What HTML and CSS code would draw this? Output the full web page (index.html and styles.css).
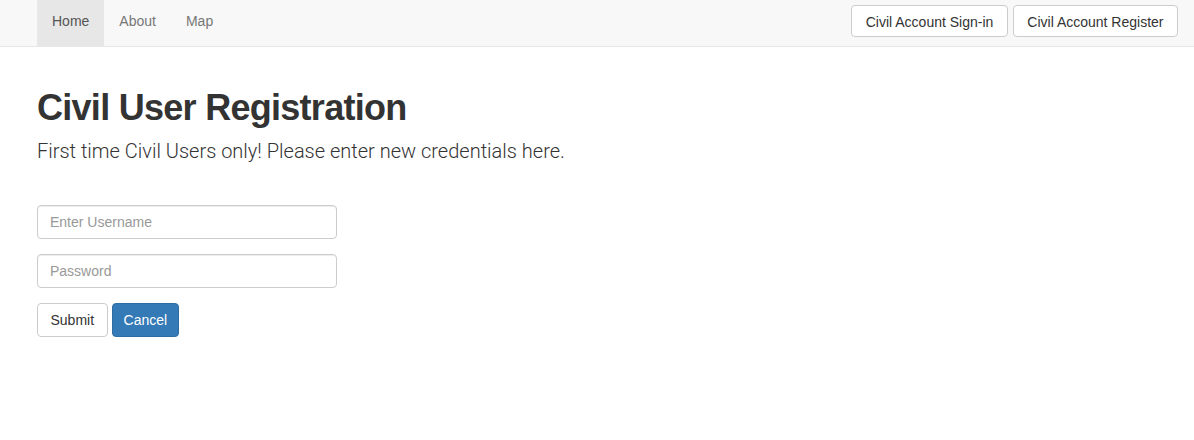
FILE: index.html
```html
<!DOCTYPE html>
<html>
<head>
<meta charset="utf-8">
<link rel="stylesheet" href="styles.css">
<title>Civil User Registration</title>
</head>
<body>
<nav class="navbar">
  <ul class="nav-links">
    <li class="active"><a href="#">Home</a></li>
    <li><a href="#">About</a></li>
    <li><a href="#">Map</a></li>
  </ul>
  <div class="nav-actions">
    <button class="btn">Civil Account Sign-in</button>
    <button class="btn">Civil Account Register</button>
  </div>
</nav>
<main class="content">
  <h1 class="title">Civil User Registration</h1>
  <p class="lead">First time Civil Users only! Please enter new credentials here.</p>
  <form class="form">
    <div class="form-group"><input class="form-control" type="text" placeholder="Enter Username"></div>
    <div class="form-group"><input class="form-control" type="password" placeholder="Password"></div>
    <div class="form-actions">
      <button type="button" class="btn">Submit</button>
      <button type="button" class="btn btn-primary">Cancel</button>
    </div>
  </form>
</main>
</body>
</html>
```

FILE: styles.css
```css
* { box-sizing: border-box; }
html, body { margin: 0; padding: 0; background: #fff; }
body {
  font-family: "Liberation Sans", Arial, sans-serif;
  font-size: 14px;
  line-height: 1.42857;
  color: #333;
}
.navbar {
  display: flex;
  justify-content: space-between;
  align-items: center;
  height: 47px;
  background: #f8f8f8;
  border-bottom: 1px solid #e7e7e7;
  padding: 0 16px 0 37px;
}
.nav-links {
  display: flex;
  list-style: none;
  margin: 0;
  padding: 0;
  height: 46px;
  align-self: flex-start;
}
.nav-links li a {
  display: block;
  padding: 0 15px;
  line-height: 42px;
  height: 46px;
  color: #777;
  text-decoration: none;
}
.nav-links li.active a {
  background: #e7e7e7;
  color: #555;
}
.nav-actions {
  display: flex;
  gap: 5px;
  align-self: flex-start;
  margin-top: 5px;
}
.btn {
  font-family: inherit;
  font-size: 14px;
  line-height: 20px;
  padding: 6px 12px;
  height: 33px;
  border: 1px solid #ccc;
  border-radius: 4px;
  background: #fff;
  color: #333;
  cursor: pointer;
}
.nav-actions .btn { padding: 6px 13.5px; height: 32px; }
.btn-primary {
  background: #337ab7;
  border-color: #2e6da4;
  color: #fff;
}
.content {
  padding: 0 37px;
}
.title {
  font-size: 36px;
  font-weight: bold;
  letter-spacing: -0.72px;
  line-height: 1.1;
  margin: 41px 0 0 0;
}
.lead {
  font-family: Roboto, "Liberation Sans", sans-serif;
  font-size: 20px;
  font-weight: 300;
  line-height: 1.4;
  margin: 9px 0 0 0;
  color: #333;
}
.form {
  margin-top: 40px;
  width: 300px;
}
.form-group { margin-bottom: 15px; }
.form-control {
  display: block;
  width: 100%;
  height: 34px;
  padding: 6px 12px;
  font-family: inherit;
  font-size: 14px;
  color: #555;
  border: 1px solid #ccc;
  border-radius: 4px;
  box-shadow: inset 0 1px 1px rgba(0,0,0,.075);
}
.form-control::placeholder { color: #999; }
.form-actions { display: flex; gap: 4px; }
.form-actions .btn { height: 34px; padding: 6px 12.5px; }
.form-actions .btn-primary { padding: 6px 11px; }
```
